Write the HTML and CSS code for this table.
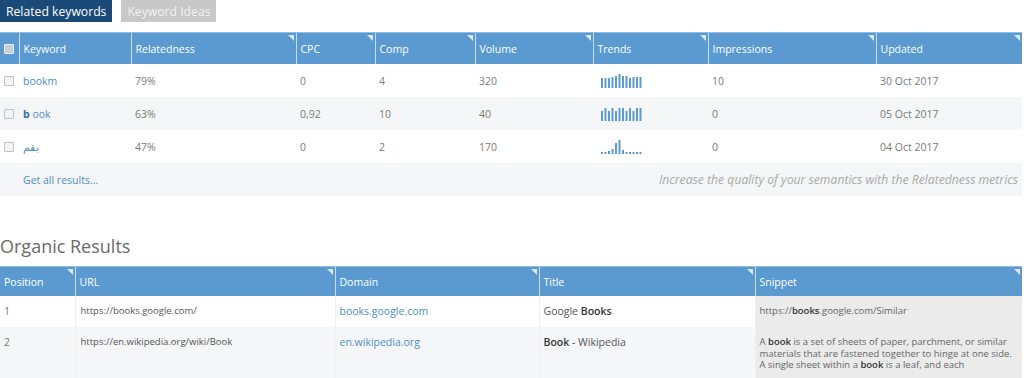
FILE: index.html
```html
<!DOCTYPE html>
<html>
<head>
<meta charset="utf-8">
<link rel="stylesheet" href="styles.css">
</head>
<body>
<div class="tabs">
  <span class="tab active">Related keywords</span>
  <span class="tab">Keyword Ideas</span>
</div>

<table class="grid kw">
  <colgroup>
    <col style="width:19px"><col style="width:112px"><col style="width:165px"><col style="width:79px"><col style="width:100px"><col style="width:118px"><col style="width:115px"><col style="width:168px"><col style="width:146px">
  </colgroup>
  <thead>
    <tr>
      <th class="cb"><span class="box head"></span></th>
      <th>Keyword</th>
      <th class="sort">Relatedness</th>
      <th class="sort">CPC</th>
      <th class="sort">Comp</th>
      <th class="sort">Volume</th>
      <th class="sort">Trends</th>
      <th class="sort">Impressions</th>
      <th class="sort">Updated</th>
    </tr>
  </thead>
  <tbody>
    <tr>
      <td class="cb"><span class="box"></span></td>
      <td><a>bookm</a></td>
      <td>79%</td><td>0</td><td>4</td><td>320</td>
      <td><svg class="spark" width="44" height="16" viewBox="0 0 44 16"><g fill="#5b9bd1"><rect x="1" y="5" width="2" height="10"/><rect x="4.5" y="5" width="2" height="10"/><rect x="8" y="5" width="2" height="10"/><rect x="11.5" y="4" width="2" height="11"/><rect x="15" y="3" width="2" height="12"/><rect x="18.5" y="1" width="2" height="14"/><rect x="22" y="3" width="2" height="12"/><rect x="25.5" y="3" width="2" height="12"/><rect x="29" y="5" width="2" height="10"/><rect x="32.5" y="4" width="2" height="11"/><rect x="36" y="4" width="2" height="11"/><rect x="39.5" y="4" width="2" height="11"/></g></svg></td>
      <td>10</td><td>30 Oct 2017</td>
    </tr>
    <tr>
      <td class="cb"><span class="box"></span></td>
      <td><a><b>b</b> ook</a></td>
      <td>63%</td><td>0,92</td><td>10</td><td>40</td>
      <td><svg class="spark" width="44" height="16" viewBox="0 0 44 16"><g fill="#5b9bd1"><rect x="1" y="5" width="2" height="10"/><rect x="4.5" y="2" width="2" height="13"/><rect x="8" y="5" width="2" height="10"/><rect x="11.5" y="2" width="2" height="13"/><rect x="15" y="5" width="2" height="10"/><rect x="18.5" y="2" width="2" height="13"/><rect x="22" y="2" width="2" height="13"/><rect x="25.5" y="5" width="2" height="10"/><rect x="29" y="2" width="2" height="13"/><rect x="32.5" y="5" width="2" height="10"/><rect x="36" y="2" width="2" height="13"/><rect x="39.5" y="2" width="2" height="13"/></g></svg></td>
      <td>0</td><td>05 Oct 2017</td>
    </tr>
    <tr>
      <td class="cb"><span class="box"></span></td>
      <td><a>بقم</a></td>
      <td>47%</td><td>0</td><td>2</td><td>170</td>
      <td><svg class="spark" width="44" height="16" viewBox="0 0 44 16"><g fill="#5b9bd1"><rect x="1" y="13" width="2" height="2"/><rect x="4.5" y="13" width="2" height="2"/><rect x="8" y="12" width="2" height="3"/><rect x="11.5" y="10" width="2" height="5"/><rect x="15" y="4" width="2" height="11"/><rect x="18.5" y="1" width="2" height="14"/><rect x="22" y="11" width="2" height="4"/><rect x="25.5" y="13" width="2" height="2"/><rect x="29" y="13" width="2" height="2"/><rect x="32.5" y="13" width="2" height="2"/><rect x="36" y="13" width="2" height="2"/><rect x="39.5" y="13" width="2" height="2"/></g></svg></td>
      <td>0</td><td>04 Oct 2017</td>
    </tr>
    <tr class="foot">
      <td></td>
      <td colspan="3"><a>Get all results...</a></td>
      <td colspan="5" class="hint">Increase the quality of your semantics with the Relatedness metrics</td>
    </tr>
  </tbody>
</table>

<h2 class="title">Organic Results</h2>

<table class="grid org">
  <colgroup>
    <col style="width:75px"><col style="width:260px"><col style="width:204px"><col style="width:216px"><col style="width:267px">
  </colgroup>
  <thead>
    <tr>
      <th class="sort">Position</th>
      <th class="sort">URL</th>
      <th class="sort">Domain</th>
      <th class="sort">Title</th>
      <th class="sort">Snippet</th>
    </tr>
  </thead>
  <tbody>
    <tr>
      <td>1</td>
      <td class="url">https://books.google.com/</td>
      <td><a class="big">books.google.com</a></td>
      <td class="dark">Google <b>Books</b></td>
      <td class="snip">https://<b>books</b>.google.com/Similar</td>
    </tr>
    <tr>
      <td>2</td>
      <td class="url">https://en.wikipedia.org/wiki/Book</td>
      <td><a class="big">en.wikipedia.org</a></td>
      <td class="dark"><b>Book</b> - Wikipedia</td>
      <td class="snip">A <b>book</b> is a set of sheets of paper, parchment, or similar materials that are fastened together to hinge at one side. A single sheet within a <b>book</b> is a leaf, and each</td>
    </tr>
  </tbody>
</table>
</body>
</html>
```

FILE: styles.css
```css
html, body {
  margin: 0;
  padding: 0;
  background: #fff;
  font-family: "Open Sans", "Liberation Sans", sans-serif;
  font-size: 10.5px;
  color: #7a7a7a;
}

.tabs {
  display: flex;
  gap: 9px;
  height: 22px;
  margin-bottom: 10px;
}

.tab {
  display: flex;
  align-items: center;
  padding: 0 6px;
  font-size: 12.2px;
  color: #f2f2f2;
  background: #c8c8c8;
}

.tab.active {
  background: #1a4a78;
  color: #fff;
}

.grid {
  width: 1022px;
  border-collapse: collapse;
  table-layout: fixed;
}

.grid th {
  position: relative;
  height: 31px;
  padding: 0 4px;
  text-align: left;
  font-weight: normal;
  font-size: 10.5px;
  color: #fff;
  background: #5a9ad0;
  border-top: 1px solid #8fbde3;
  border-left: 1px solid #c6dcf0;
  white-space: nowrap;
}

.grid th:first-child {
  border-left: none;
}

.grid th.sort::after {
  content: "";
  position: absolute;
  top: 2px;
  right: 2px;
  border-top: 6px solid #dbe9f6;
  border-left: 6px solid transparent;
}

.grid td {
  padding: 0 4px;
  vertical-align: middle;
  white-space: nowrap;
}

.org td {
  border-left: 1px solid #eef0f2;
}

.org td:first-child {
  border-left: none;
}

.kw tbody tr {
  height: 33px;
}

.kw tbody tr:nth-child(even) {
  background: #f5f6f7;
}

.kw .cb {
  padding: 0 0 0 4px;
}

.box {
  display: block;
  width: 8px;
  height: 8px;
  border: 1px solid #c2c2c2;
  background: #f3f3f3;
  border-radius: 1px;
}

.box.head {
  border-color: #e4eef8;
  background: #c9cfd6;
}

a {
  color: #4e8ec6;
  text-decoration: none;
}

a b {
  color: #3c6f9c;
}

.spark {
  display: block;
  margin-left: 3px;
}

.hint {
  text-align: right;
  font-style: italic;
  color: #a9a9a9;
  font-size: 12.2px;
  padding-right: 12px;
}

.title {
  margin: 40px 0 9px;
  font-size: 18px;
  font-weight: normal;
  color: #6b6b6b;
  line-height: 21px;
}

.org th {
  height: 29px;
}

.org td {
  vertical-align: top;
  padding: 9px 4px 8px 4px;
  line-height: 12px;
}

.org td.url {
  padding-left: 5px;
  font-size: 9.5px;
  color: #555;
}

.org tbody tr:nth-child(1) {
  height: 31px;
}

.org tbody tr:nth-child(2) {
  background: #f5f6f7;
}

.org td.dark {
  color: #555;
  font-size: 10.5px;
}

.org td.dark b {
  color: #333;
  font-weight: 600;
}

.org a.big {
  font-size: 10.5px;
}

.org td.snip {
  background: #ebebeb;
  white-space: normal;
  font-size: 9.5px;
  line-height: 11.7px;
  color: #666;
  padding-right: 2px;
}

.org td.snip b {
  color: #333;
  font-weight: 600;
}
```
